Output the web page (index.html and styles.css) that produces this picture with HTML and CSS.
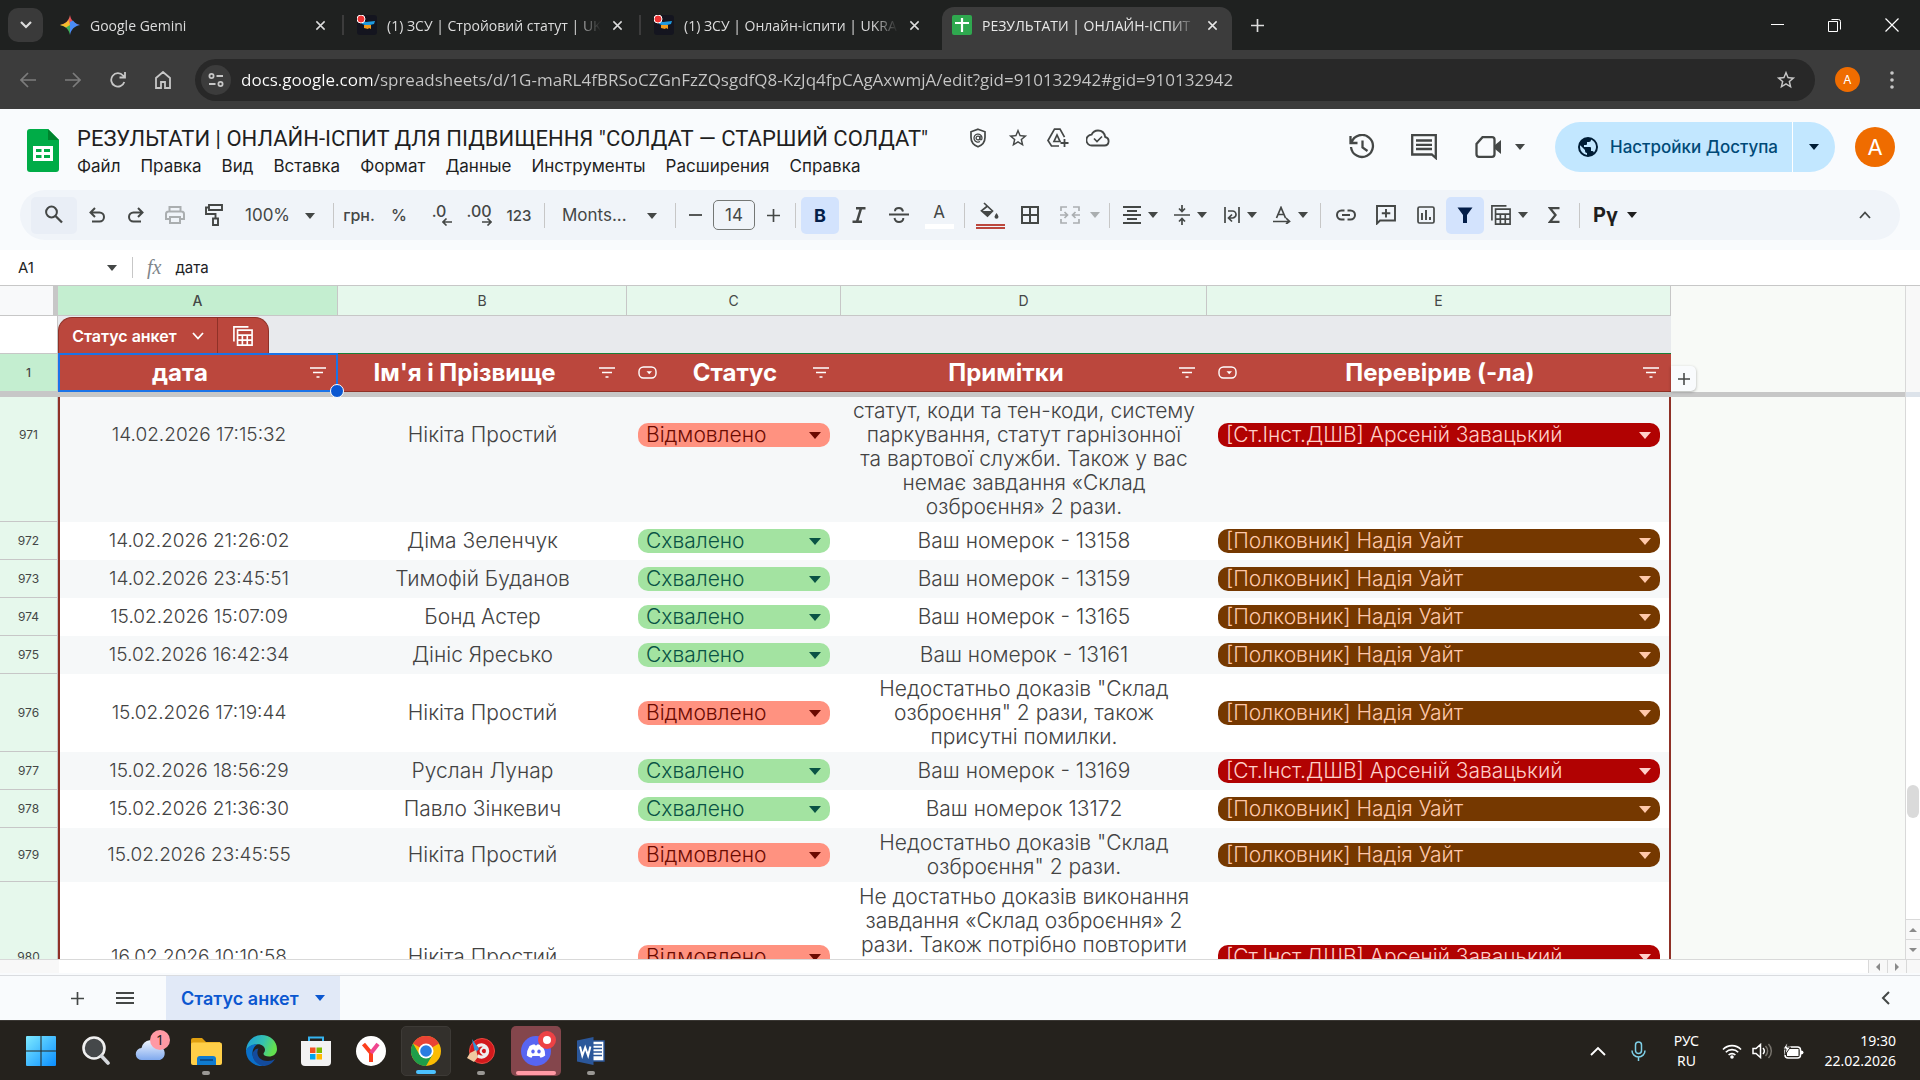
FILE: index.html
```html
<!DOCTYPE html>
<html lang="uk">
<head>
    <meta charset="UTF-8">
    <meta name="viewport" content="width=device-width, initial-scale=1.0">
    <title>РЕЗУЛЬТАТИ | ОНЛАЙН-ІСПИТ</title>
    <link rel="stylesheet" href="styles.css">
</head>
<body>
    <svg class="sprite" aria-hidden="true">
        <symbol id="i-close" viewBox="0 0 12 12"><path d="M1.5 1.5l9 9M10.5 1.5l-9 9" fill="none" stroke="currentColor" stroke-width="1.6"/></symbol>
        <symbol id="i-plus" viewBox="0 0 14 14"><path d="M7 0v14M0 7h14" fill="none" stroke="currentColor" stroke-width="1.8"/></symbol>
        <symbol id="i-star" viewBox="0 0 24 24"><path d="M22 9.24l-7.19-.62L12 2 9.19 8.63 2 9.24l5.46 4.73L5.82 21 12 17.27 18.18 21l-1.63-7.03L22 9.24zM12 15.4l-3.76 2.27 1-4.28-3.32-2.88 4.38-.38L12 6.1l1.71 4.04 4.38.38-3.32 2.88 1 4.28L12 15.4z"/></symbol>
        <symbol id="i-filter" viewBox="0 0 16 11"><path d="M0 1h16M3 5.500h10M6.500 10h3" fill="none" stroke="currentColor" stroke-width="1.5"/></symbol>
        <symbol id="i-chip" viewBox="0 0 19 13"><rect x="1" y="1" width="17" height="11" rx="4.500" fill="none" stroke="currentColor" stroke-width="1.400"/><path d="M8.500 5.200h5.500L11.200 8.300z"/></symbol>
        <symbol id="i-table" viewBox="0 0 22 22"><path d="M1 17V1h16" fill="none" stroke="currentColor" stroke-width="1.800"/><path d="M5 4.500h16V21H5zM5 10h16M5 15.500h16M10.300 10v11M15.700 10v11" fill="none" stroke="currentColor" stroke-width="1.800"/></symbol>
        <symbol id="i-zsu" viewBox="0 0 20 20"><rect width="20" height="20" rx="3" fill="#14151f"/><path d="M5 6l4 1 9-1-1 3-4 1H8L5 9z" fill="#1e9ae0"/><path d="M7 10h7v4l-2-1-1 1-4-1z" fill="#f09a1c"/><circle cx="4" cy="4" r="4" fill="#e33" stroke="#fff" stroke-width="1"/></symbol>
    </svg>

    <!-- Browser tabs -->
    <header class="tabstrip">
        <button class="tab-search" aria-label="Search tabs"><svg width="12" height="8" viewBox="0 0 12 8"><path d="M1 1l5 5 5-5" fill="none" stroke="currentColor" stroke-width="2.2"/></svg></button>
        <div class="tab">
            <svg class="favicon" viewBox="0 0 20 20"><path d="M10 0c1 5.500 4.500 9 10 10H10z" fill="#e8505b"/><path d="M10 0C9 5.500 5.500 9 0 10h10z" fill="#e8695b"/><path d="M0 10c5.500 1 9 4.500 10 10V10z" fill="#3fae5c"/><path d="M0 10c4-.7 7-2.500 8.500-5L10 10l-4 2.500C4.500 11.300 2 10.400 0 10z" fill="#f5bd2d"/><path d="M20 10c-5.500 1-9 4.500-10 10V7l3-1.500c1.800 2.500 4 4 7 4.500z" fill="#4a8cf7"/></svg>
            <span class="tab-title">Google Gemini</span>
            <button class="tab-close" aria-label="Close"><svg width="11" height="11"><use href="#i-close"/></svg></button>
        </div>
        <div class="tab">
            <svg class="favicon"><use href="#i-zsu"/></svg>
            <span class="tab-title">(1) ЗСУ | Стройовий статут | UK</span>
            <button class="tab-close" aria-label="Close"><svg width="11" height="11"><use href="#i-close"/></svg></button>
        </div>
        <div class="tab">
            <svg class="favicon"><use href="#i-zsu"/></svg>
            <span class="tab-title">(1) ЗСУ | Онлайн-іспити | UKRA</span>
            <button class="tab-close" aria-label="Close"><svg width="11" height="11"><use href="#i-close"/></svg></button>
        </div>
        <div class="tab active">
            <svg class="favicon" viewBox="0 0 20 20"><rect width="20" height="20" rx="2" fill="#2fa84f"/><path d="M10 3v14M3 8h14" stroke="#fff" stroke-width="2.200"/></svg>
            <span class="tab-title">РЕЗУЛЬТАТИ | ОНЛАЙН-ІСПИТ</span>
            <button class="tab-close" aria-label="Close"><svg width="11" height="11"><use href="#i-close"/></svg></button>
        </div>
        <button class="new-tab" aria-label="New tab"><svg width="13" height="13"><use href="#i-plus"/></svg></button>
        <div class="window-buttons">
            <button aria-label="Minimize"><svg width="14" height="14" viewBox="0 0 14 14"><path d="M0 6.500h13" stroke="currentColor"/></svg></button>
            <button aria-label="Restore"><svg width="14" height="14" viewBox="0 0 14 14"><path d="M.5 3.500h9v10h-9zM3.500 1.500h7q2 0 2 2v8" fill="none" stroke="currentColor"/></svg></button>
            <button aria-label="Close window"><svg width="14" height="14" viewBox="0 0 14 14"><path d="M.5.5l13 13M13.500.5l-13 13" stroke="currentColor" stroke-width="1.200"/></svg></button>
        </div>
    </header>

    <nav class="navbar">
        <button class="nav-button dim" aria-label="Back"><svg width="16" height="16" viewBox="0 0 16 16"><path d="M16 8H1M8 1L1 8l7 7" fill="none" stroke="currentColor" stroke-width="1.700"/></svg></button>
        <button class="nav-button dim" aria-label="Forward"><svg width="16" height="16" viewBox="0 0 16 16"><path d="M0 8h15M8 1l7 7-7 7" fill="none" stroke="currentColor" stroke-width="1.700"/></svg></button>
        <button class="nav-button" aria-label="Reload"><svg width="16" height="16" viewBox="0 0 16 16"><path d="M14.300 10A6.700 6.700 0 1 1 13 3.500l2 2M15 0v5.500H9.500" fill="none" stroke="currentColor" stroke-width="1.800"/></svg></button>
        <button class="nav-button" aria-label="Home"><svg width="16" height="18" viewBox="0 0 16 18"><path d="M1 17V7l7-6 7 6v10h-5v-6H6v6z" fill="none" stroke="currentColor" stroke-width="1.800"/></svg></button>
        <div class="address">
            <button class="site-info" aria-label="Site information"><svg width="16" height="14" viewBox="0 0 16 14"><g fill="none" stroke="currentColor" stroke-width="1.800"><circle cx="3.500" cy="3" r="2.100"/><path d="M8.500 3H15M1 11h6.500"/><circle cx="12.500" cy="11" r="2.100"/></g></svg></button>
            <input class="url" type="text" aria-label="Address" value="docs.google.com/spreadsheets/d/1G-maRL4fBRSoCZGnFzZQsgdfQ8-KzJq4fpCAgAxwmjA/edit?gid=910132942#gid=910132942">
            <button class="bookmark" aria-label="Bookmark"><svg width="22" height="22"><use href="#i-star"/></svg></button>
        </div>
        <button class="profile" aria-label="Profile">А</button>
        <button class="kebab" aria-label="Menu"><svg width="4" height="18" viewBox="0 0 4 18"><circle cx="2" cy="2" r="1.800"/><circle cx="2" cy="9" r="1.800"/><circle cx="2" cy="16" r="1.800"/></svg></button>
    </nav>

    <!-- Document header -->
    <div class="app-header">
        <svg class="logo" viewBox="0 0 32 43"><path d="M3 0h18l11 11v29a3 3 0 0 1-3 3H3a3 3 0 0 1-3-3V3a3 3 0 0 1 3-3z" fill="#00ac47"/><path d="M21 0l11 11H21z" fill="#00832d"/><path d="M6 17h20v15H6zm3 3v3h5.500v-3zm8 0v3H23v-3zm-8 6v3h5.500v-3zm8 0v3H23v-3z" fill="#fff" fill-rule="evenodd"/></svg>
        <div class="doc">
            <div class="doc-row">
                <h1>РЕЗУЛЬТАТИ | ОНЛАЙН-ІСПИТ ДЛЯ ПІДВИЩЕННЯ "СОЛДАТ — СТАРШИЙ СОЛДАТ"</h1>
                <button aria-label="Security"><svg width="20" height="20" viewBox="0 0 20 20"><path d="M10 1.200l7 2.600v5.400c0 4.500-3 8-7 9.600-4-1.600-7-5.100-7-9.600V3.800z" fill="none" stroke="currentColor" stroke-width="1.700"/><circle cx="10" cy="10" r="1.900" fill="none" stroke="currentColor" stroke-width="1.300"/><path d="M12 8v2.700c0 1.600 2 1.500 2-.7a4 4 0 1 0-2 3.500" fill="none" stroke="currentColor" stroke-width="1.300"/></svg></button>
                <button aria-label="Star"><svg width="22" height="22"><use href="#i-star"/></svg></button>
                <button aria-label="Add to Drive"><svg width="22" height="20" viewBox="0 0 22 20"><path d="M12 18H4.500L1 12.500 7.500 1.200h5.500l4.500 8M7 13.500h6L10 7z" fill="none" stroke="currentColor" stroke-width="1.700"/><path d="M17.500 11v8M13.500 15h8" stroke="currentColor" stroke-width="1.800"/></svg></button>
                <button aria-label="Saved"><svg width="24" height="18" viewBox="0 0 24 18"><path d="M18.500 16.500a4.300 4.300 0 0 0 .7-8.500C18.500 4 15.700 1.500 12 1.500c-3 0-5.300 1.600-6.400 4.200A5.400 5.400 0 0 0 6 16.500z" fill="none" stroke="currentColor" stroke-width="1.800"/><path d="M8 9.500l3 3 5-5" fill="none" stroke="currentColor" stroke-width="1.700"/></svg></button>
            </div>
            <div class="menus">
                <button>Файл</button>
                <button>Правка</button>
                <button>Вид</button>
                <button>Вставка</button>
                <button>Формат</button>
                <button>Данные</button>
                <button>Инструменты</button>
                <button>Расширения</button>
                <button>Справка</button>
            </div>
        </div>
        <div class="header-actions">
            <button class="action" aria-label="History"><svg width="28" height="26" viewBox="0 0 28 26"><path d="M3.500 8.500A11 11 0 1 1 3 13M2.500 2v7h7M14.500 6.500v7l5 3.500" fill="none" stroke="currentColor" stroke-width="2.300"/></svg></button>
            <button class="action" aria-label="Comments"><svg width="26" height="26" viewBox="0 0 26 26"><path d="M1.200 1.200h23.600V24l-4-3.500H1.200z" fill="none" stroke="currentColor" stroke-width="2.300"/><path d="M5 6.500h16M5 10.800h16M5 15h16" stroke="currentColor" stroke-width="2.300"/></svg></button>
            <button class="action meet" aria-label="Meet"><svg width="27" height="22" viewBox="0 0 27 22"><path d="M7.500 1.200H17q2.500 0 2.500 2.500v14.600q0 2.500-2.500 2.500H4q-2.500 0-2.500-2.500V8z" fill="none" stroke="currentColor" stroke-width="2.300"/><path d="M20 9l6-5v14l-6-5z"/></svg><span class="caret"></span></button>
            <div class="share">
                <button class="share-main"><svg width="20" height="20" viewBox="2 2 20 20"><path d="M12 2a10 10 0 1 0 0 20 10 10 0 0 0 0-20zm-1 17.930A8 8 0 0 1 4 12c0-.62.080-1.210.210-1.790L9 15v1a2 2 0 0 0 2 2v1.930zm6.900-2.540A2 2 0 0 0 16 16h-1v-3a1 1 0 0 0-1-1H8v-2h2a1 1 0 0 0 1-1V7h2a2 2 0 0 0 2-2v-.41A8 8 0 0 1 17.900 17.390z"/></svg>Настройки Доступа</button>
                <button class="share-more" aria-label="More sharing options"><span class="caret"></span></button>
            </div>
            <button class="avatar" aria-label="Account">А</button>
        </div>
    </div>

    <!-- Toolbar -->
    <div class="toolbar">
        <button class="tool search" aria-label="Search"><svg width="20" height="20" viewBox="0 0 20 20"><circle cx="7.500" cy="7" r="5.400" fill="none" stroke="currentColor" stroke-width="2"/><path d="M11.500 11l6.500 6.500" stroke="currentColor" stroke-width="2.300"/></svg></button>
        <button class="tool edit" aria-label="Undo"><svg width="16" height="16" viewBox="0 0 16 16"><path d="M3 14.500h7.500a4.500 4.500 0 0 0 0-9H2M6 1L1.500 5.500 6 10" fill="none" stroke="currentColor" stroke-width="2"/></svg></button>
        <button class="tool edit" aria-label="Redo"><svg width="16" height="16" viewBox="0 0 16 16"><path d="M13 14.500H5.500a4.500 4.500 0 0 1 0-9H14M10 1l4.500 4.500L10 10" fill="none" stroke="currentColor" stroke-width="2"/></svg></button>
        <button class="tool edit faint" aria-label="Print"><svg width="20" height="18" viewBox="0 0 20 18"><path d="M4.500 5V1h11v4M4.500 13H1V8q0-2.500 2.500-2.500h13Q19 5.500 19 8v5h-3.500M5 11h10v6H5z" fill="none" stroke="currentColor" stroke-width="2"/></svg></button>
        <button class="tool edit" aria-label="Paint format"><svg width="18" height="22" viewBox="0 0 18 22"><path d="M4 1h13v5H4zM4 3.500H1V10h9.500v4M8 14.500h5V21H8z" fill="none" stroke="currentColor" stroke-width="1.900"/></svg></button>
        <span class="picker zoom"><select aria-label="Zoom"><option>100%</option></select></span>
        <span class="sep"></span>
        <button class="tool small">грн.</button>
        <button class="tool small">%</button>
        <button class="tool decimal" aria-label="Decrease decimals">.0<svg width="10" height="8" viewBox="0 0 10 8"><path d="M10 4H1M4.500 .5L1 4l3.500 3.500" fill="none" stroke="currentColor" stroke-width="1.600"/></svg></button>
        <button class="tool decimal" aria-label="Increase decimals">.00<svg width="10" height="8" viewBox="0 0 10 8"><path d="M0 4h9M5.500 .5L9 4 5.500 7.500" fill="none" stroke="currentColor" stroke-width="1.600"/></svg></button>
        <button class="tool number">123</button>
        <span class="sep"></span>
        <span class="picker font"><select aria-label="Font"><option>Monts...</option></select></span>
        <span class="sep"></span>
        <div class="stepper">
            <button aria-label="Smaller"><svg width="13" height="14" viewBox="0 0 13 14"><path d="M0 7h13" stroke="currentColor" stroke-width="1.800"/></svg></button>
            <input type="text" aria-label="Font size" value="14">
            <button aria-label="Larger"><svg width="13" height="13"><use href="#i-plus"/></svg></button>
        </div>
        <span class="sep"></span>
        <button class="tool on bold">B</button>
        <button class="tool" aria-label="Italic"><svg width="14" height="16" viewBox="0 0 14 16"><path d="M4 1.300h9.500M.5 14.700H10M9 1.300L5 14.700" fill="none" stroke="currentColor" stroke-width="2.500"/></svg></button>
        <button class="tool" aria-label="Strikethrough"><svg width="20" height="16" viewBox="0 0 20 16"><path d="M0 7.500h20M14 4.500C13.500 2 12 1 10 1S6 2 6 4.200M5.500 11c.5 2.700 2 4 4.500 4s4.500-1.300 4.300-4" fill="none" stroke="currentColor" stroke-width="2"/></svg></button>
        <button class="tool text-color">A</button>
        <span class="sep"></span>
        <button class="tool fill" aria-label="Fill colour"><svg width="20" height="18" viewBox="0 0 20 18"><path d="M4 1l8.500 8-5 5-6-5.200L7.500 4" fill="none" stroke="currentColor" stroke-width="1.700"/><path d="M2 9h10l-4.500 5z"/><path d="M16.500 11q2 2.600 2 3.800a2 2 0 0 1-4 0q0-1.200 2-3.800z"/></svg></button>
        <button class="tool" aria-label="Borders"><svg width="18" height="18" viewBox="0 0 18 18"><path d="M1 1h16v16H1zM9 1v16M1 9h16" fill="none" stroke="currentColor" stroke-width="2"/></svg></button>
        <button class="tool-menu wide faint" aria-label="Merge"><svg width="20" height="18" viewBox="0 0 20 18"><path d="M7 1H1v4M1 13v4h6M13 1h6v4M19 13v4h-6M0 9h7M4.500 6l3 3-3 3M20 9h-7M15.500 6l-3 3 3 3" fill="none" stroke="currentColor" stroke-width="1.700"/></svg><span class="caret"></span></button>
        <span class="sep"></span>
        <button class="tool-menu" aria-label="Align"><svg width="18" height="18" viewBox="0 0 18 18"><path d="M0 1h18M4 5h10M0 9h18M4 13h10M0 17h18" stroke="currentColor" stroke-width="1.800"/></svg><span class="caret"></span></button>
        <button class="tool-menu" aria-label="Vertical align"><svg width="16" height="20" viewBox="0 0 16 20"><path d="M0 10h16M8 0v6M5 3.500l3 3 3-3M8 20v-6M5 16.500l3-3 3 3" fill="none" stroke="currentColor" stroke-width="1.700"/></svg><span class="caret"></span></button>
        <button class="tool-menu" aria-label="Wrap"><svg width="16" height="16" viewBox="0 0 16 16"><path d="M1 0v16M15 0v16M4 4h4.500a3 3 0 0 1 0 7H5M8 7.500L4.500 11 8 14.500" fill="none" stroke="currentColor" stroke-width="1.700"/></svg><span class="caret"></span></button>
        <button class="tool-menu" aria-label="Rotate"><svg width="18" height="18" viewBox="0 0 18 18"><path d="M3.500 12L8 1.500l4.500 10.500M5.300 8.500h5.500M0 15.500h16M13 12l3.500 3.500L13 18" fill="none" stroke="currentColor" stroke-width="1.700"/></svg><span class="caret"></span></button>
        <span class="sep"></span>
        <button class="tool" aria-label="Link"><svg width="20" height="12" viewBox="0 0 20 12"><path d="M8.500 1.500H5.500a4.500 4.500 0 0 0 0 9h3M11.500 1.500h3a4.500 4.500 0 0 1 0 9h-3M6 6h8" fill="none" stroke="currentColor" stroke-width="2"/></svg></button>
        <button class="tool" aria-label="Comment"><svg width="20" height="20" viewBox="0 0 20 20"><path d="M1 18.500V1h18v14.500H4zM10 4v8.500M5.800 8.200h8.500" fill="none" stroke="currentColor" stroke-width="1.900"/></svg></button>
        <button class="tool" aria-label="Chart"><svg width="18" height="18" viewBox="0 0 18 18"><rect x="1" y="1" width="16" height="16" rx="1.500" fill="none" stroke="currentColor" stroke-width="1.700"/><path d="M5 7v7M9 4v10M13 11v3" stroke="currentColor" stroke-width="1.900"/></svg></button>
        <button class="tool on" aria-label="Filter"><svg width="16" height="16" viewBox="0 0 16 16"><path d="M.5.500h15L10 8v8H6V8z"/></svg></button>
        <button class="tool-menu" aria-label="Tables"><svg width="20" height="20"><use href="#i-table"/></svg><span class="caret"></span></button>
        <button class="tool" aria-label="Functions"><svg width="12" height="16" viewBox="0 0 12 16"><path d="M11.500 1.200H2L7.500 8 2 14.800h9.500" fill="none" stroke="currentColor" stroke-width="2.300"/></svg></button>
        <span class="sep"></span>
        <button class="tool-menu py">Pү<span class="caret"></span></button>
        <button class="tool collapse" aria-label="Collapse"><svg width="12" height="8" viewBox="0 0 12 8"><path d="M1 7l5-5.500L11 7" fill="none" stroke="currentColor" stroke-width="1.800"/></svg></button>
    </div>

    <div class="formula-bar">
        <input class="name-box" type="text" aria-label="Name box" value="A1">
        <span class="caret"></span>
        <span class="fx">fx</span>
        <input class="formula" type="text" aria-label="Formula" value="дата">
    </div>

    <main class="workspace">
        <div class="sheet">
            <div class="frozen">
                <table class="grid">
                    <colgroup><col class="c-num"><col class="c-a"><col class="c-b"><col class="c-c"><col class="c-d"><col class="c-e"></colgroup>
                    <thead>
                        <tr class="letters"><th class="corner"></th><th class="selected">A</th><th>B</th><th>C</th><th>D</th><th>E</th></tr>
                        <tr class="band">
                            <th></th>
                            <td colspan="5">
                                <div class="table-tab">
                                    <button class="table-name">Статус анкет<svg width="12" height="8" viewBox="0 0 12 8"><path d="M1 1l5 5.500L11 1" fill="none" stroke="currentColor" stroke-width="1.800"/></svg></button>
                                    <button class="table-views" aria-label="Table views"><svg width="20" height="20"><use href="#i-table"/></svg></button>
                                </div>
                            </td>
                        </tr>
                        <tr class="titles">
                            <th class="num">1</th>
                            <th class="current"><div class="title-cell"><span>дата</span><svg class="filter"><use href="#i-filter"/></svg></div></th>
                            <th><div class="title-cell"><span>Ім'я і Прізвище</span><svg class="filter"><use href="#i-filter"/></svg></div></th>
                            <th><div class="title-cell has-chip"><svg class="chip-icon"><use href="#i-chip"/></svg><span>Статус</span><svg class="filter"><use href="#i-filter"/></svg></div></th>
                            <th><div class="title-cell"><span>Примітки</span><svg class="filter"><use href="#i-filter"/></svg></div></th>
                            <th><div class="title-cell has-chip"><svg class="chip-icon"><use href="#i-chip"/></svg><span>Перевірив (-ла)</span><svg class="filter"><use href="#i-filter"/></svg></div><button class="add-column" aria-label="Add column"><svg width="12" height="12"><use href="#i-plus"/></svg></button></th>
                        </tr>
                    </thead>
                </table>
            </div>
            <div class="scroller">
                <table class="grid data">
                    <colgroup><col class="c-num"><col class="c-a"><col class="c-b"><col class="c-c"><col class="c-d"><col class="c-e"></colgroup>
                    <tbody>
                        <tr class="cut-top"><th>971</th><td class="date">14.02.2026 17:15:32</td><td>Нікіта Простий</td><td><span class="chip no"><select aria-label="Статус 971"><option>Відмовлено</option></select></span></td><td class="note bottom">статут, коди та тен-коди, систему<br>паркування, статут гарнізонної<br>та вартової служби. Також у вас<br>немає завдання «Склад<br>озброєння» 2 рази.</td><td><span class="chip red"><select aria-label="Перевірив 971"><option>[Ст.Інст.ДШВ] Арсеній Завацький</option></select></span></td></tr>
                        <tr><th>972</th><td class="date">14.02.2026 21:26:02</td><td>Діма Зеленчук</td><td><span class="chip yes"><select aria-label="Статус 972"><option>Схвалено</option></select></span></td><td class="note">Ваш номерок - 13158</td><td><span class="chip brown"><select aria-label="Перевірив 972"><option>[Полковник] Надія Уайт</option></select></span></td></tr>
                        <tr><th>973</th><td class="date">14.02.2026 23:45:51</td><td>Тимофій Буданов</td><td><span class="chip yes"><select aria-label="Статус 973"><option>Схвалено</option></select></span></td><td class="note">Ваш номерок - 13159</td><td><span class="chip brown"><select aria-label="Перевірив 973"><option>[Полковник] Надія Уайт</option></select></span></td></tr>
                        <tr><th>974</th><td class="date">15.02.2026 15:07:09</td><td>Бонд Астер</td><td><span class="chip yes"><select aria-label="Статус 974"><option>Схвалено</option></select></span></td><td class="note">Ваш номерок - 13165</td><td><span class="chip brown"><select aria-label="Перевірив 974"><option>[Полковник] Надія Уайт</option></select></span></td></tr>
                        <tr><th>975</th><td class="date">15.02.2026 16:42:34</td><td>Дініс Яресько</td><td><span class="chip yes"><select aria-label="Статус 975"><option>Схвалено</option></select></span></td><td class="note">Ваш номерок - 13161</td><td><span class="chip brown"><select aria-label="Перевірив 975"><option>[Полковник] Надія Уайт</option></select></span></td></tr>
                        <tr><th>976</th><td class="date">15.02.2026 17:19:44</td><td>Нікіта Простий</td><td><span class="chip no"><select aria-label="Статус 976"><option>Відмовлено</option></select></span></td><td class="note">Недостатньо доказів "Склад<br>озброєння" 2 рази, також<br>присутні помилки.</td><td><span class="chip brown"><select aria-label="Перевірив 976"><option>[Полковник] Надія Уайт</option></select></span></td></tr>
                        <tr><th>977</th><td class="date">15.02.2026 18:56:29</td><td>Руслан Лунар</td><td><span class="chip yes"><select aria-label="Статус 977"><option>Схвалено</option></select></span></td><td class="note">Ваш номерок - 13169</td><td><span class="chip red"><select aria-label="Перевірив 977"><option>[Ст.Інст.ДШВ] Арсеній Завацький</option></select></span></td></tr>
                        <tr><th>978</th><td class="date">15.02.2026 21:36:30</td><td>Павло Зінкевич</td><td><span class="chip yes"><select aria-label="Статус 978"><option>Схвалено</option></select></span></td><td class="note">Ваш номерок 13172</td><td><span class="chip brown"><select aria-label="Перевірив 978"><option>[Полковник] Надія Уайт</option></select></span></td></tr>
                        <tr><th>979</th><td class="date">15.02.2026 23:45:55</td><td>Нікіта Простий</td><td><span class="chip no"><select aria-label="Статус 979"><option>Відмовлено</option></select></span></td><td class="note">Недостатньо доказів "Склад<br>озброєння" 2 рази.</td><td><span class="chip brown"><select aria-label="Перевірив 979"><option>[Полковник] Надія Уайт</option></select></span></td></tr>
                        <tr class="cut-bottom"><th>980</th><td class="date">16.02.2026 10:10:58</td><td>Нікіта Простий</td><td><span class="chip no"><select aria-label="Статус 980"><option>Відмовлено</option></select></span></td><td class="note top">Не достатньо доказів виконання<br>завдання «Склад озброєння» 2<br>рази. Також потрібно повторити</td><td><span class="chip red"><select aria-label="Перевірив 980"><option>[Ст.Інст.ДШВ] Арсеній Завацький</option></select></span></td></tr>
                    </tbody>
                </table>
            </div>
        </div>
        <div class="vscroll">
            <div class="vscroll-head"></div>
            <div class="vscroll-track"><div class="thumb"></div></div>
            <button aria-label="Up"><span class="arrow up"></span></button>
            <button aria-label="Down"><span class="arrow down"></span></button>
        </div>
    </main>
    <div class="hscroll">
        <div class="hscroll-track"></div>
        <button aria-label="Left"><span class="arrow left"></span></button>
        <button aria-label="Right"><span class="arrow right"></span></button>
        <div class="hscroll-end"></div>
    </div>

    <footer class="sheet-tabs">
        <button class="sheet-button" aria-label="Add sheet"><svg width="13" height="13"><use href="#i-plus"/></svg></button>
        <button class="sheet-button" aria-label="All sheets"><svg width="18" height="12" viewBox="0 0 18 12"><path d="M0 1h18M0 6h18M0 11h18" stroke="currentColor" stroke-width="1.900"/></svg></button>
        <button class="sheet-tab">Статус анкет<span class="caret"></span></button>
        <button class="sheet-button side" aria-label="Show side panel"><svg width="9" height="14" viewBox="0 0 9 14"><path d="M8 1L2 7l6 6" fill="none" stroke="currentColor" stroke-width="2"/></svg></button>
    </footer>

    <!-- Windows taskbar -->
    <div class="taskbar">
        <button class="app" aria-label="Start"><svg width="30" height="30" viewBox="0 0 30 30"><defs><linearGradient id="g-win" x2="1" y2="1"><stop stop-color="#7eeaff"/><stop offset="1" stop-color="#0a8eff"/></linearGradient></defs><path d="M1 0h13.500v14.500H0V1a1 1 0 0 1 1-1zM15.500 0H29a1 1 0 0 1 1 1v13.500H15.500zM0 15.500h14.500V30H1a1 1 0 0 1-1-1zM15.500 15.500H30V29a1 1 0 0 1-1 1H15.500z" fill="url(#g-win)"/></svg></button>
        <button class="app" aria-label="Search"><svg width="28" height="29" viewBox="0 0 28 29"><circle cx="12" cy="12" r="10.500" fill="#45484a" stroke="#f0f0f0" stroke-width="2.600"/><path d="M19.500 20l6.500 7" stroke="#d5d8dc" stroke-width="3.600" stroke-linecap="round"/></svg></button>
        <button class="app" aria-label="Weather"><svg width="32" height="30" viewBox="0 0 32 30"><defs><linearGradient id="g-cloud" x2="0" y2="1"><stop stop-color="#f0f6ff"/><stop offset="1" stop-color="#7fa9ee"/></linearGradient></defs><path d="M7 24a6 6 0 0 1-.5-12A9 9 0 0 1 24 10.500a7 7 0 0 1 1 13.500z" fill="url(#g-cloud)"/></svg><span class="badge">1</span></button>
        <button class="app running" aria-label="Explorer"><svg width="31" height="28" viewBox="0 0 31 28"><path d="M0 3a2 2 0 0 1 2-2h9l4 4h14v6H0z" fill="#e0a010"/><rect y="5.500" width="31" height="22.500" rx="2" fill="#ffcf48"/><path d="M6 28v-6a3 3 0 0 1 3-3h13a3 3 0 0 1 3 3v6z" fill="#0f7bd0"/><path d="M9 23h13" stroke="#0a4f90" stroke-width="2"/></svg></button>
        <button class="app" aria-label="Edge"><svg width="31" height="31" viewBox="0 0 31 31"><defs><linearGradient id="g-edge" x2="1" y2=".3"><stop stop-color="#1b9de2"/><stop offset=".6" stop-color="#35c1b0"/><stop offset="1" stop-color="#63e04f"/></linearGradient></defs><path d="M15.500 0C24 0 31 6 31 14c0 5-4 7.500-8 7.500-3 0-5.500-1-5.500-2.700 0-1 1.500-1.800 1.500-4 0-3-3-5.600-7-5.600C6 9.200 1 13 0 17 0 7 7 0 15.500 0z" fill="url(#g-edge)"/><path d="M0 16c1-4.500 6-7 11.500-6.800-3.500 2-5 5.500-5 9 0 6 5 10.800 11 12.600C8 32 0 25 0 16z" fill="#0a6fc8"/><path d="M12.500 13.500c-3 5 0 13 9.500 12.500 3 0 5-1 7-2-2.500 4.500-7 7-12 7-6-1-10.500-6-10.500-12 0-2.500 3-5.500 6-5.500z" fill="#134b9c"/></svg></button>
        <button class="app" aria-label="Store"><svg width="30" height="30" viewBox="0 0 30 30"><path d="M8 7V1.500h14V7" fill="none" stroke="#35b4f0" stroke-width="2"/><path d="M0 5h30v21a4 4 0 0 1-4 4H4a4 4 0 0 1-4-4z" fill="#f2f2f2"/><path d="M9 11.500h5.500V17H9z" fill="#f25022"/><path d="M15.500 11.500H21V17h-5.500z" fill="#7fba00"/><path d="M9 18h5.500v5.500H9z" fill="#00a4ef"/><path d="M15.500 18H21v5.500h-5.500z" fill="#ffb900"/></svg></button>
        <button class="app" aria-label="Yandex"><svg width="30" height="30" viewBox="0 0 30 30"><circle cx="15" cy="15" r="15" fill="#fff"/><path d="M7.500 8l7.500 9v9" fill="none" stroke="#fc3f1d" stroke-width="4"/><path d="M15 17l7-9" stroke="#f0468f" stroke-width="4"/></svg></button>
        <button class="app focused" aria-label="Chrome"><svg width="30" height="30" viewBox="0 0 30 30"><circle cx="15" cy="15" r="15" fill="#fbbc04"/><path d="M15 15L2 7.500A15 15 0 0 1 28 7.500z" fill="#ea4335"/><path d="M2 7.500A15 15 0 0 0 15 30l6.500-11.300L8.500 18.700z" fill="#1e9e4a"/><circle cx="15" cy="15" r="7.500" fill="#fff"/><circle cx="15" cy="15" r="5.800" fill="#2a7de1"/></svg></button>
        <button class="app running" aria-label="CCleaner"><svg width="28" height="28" viewBox="0 0 28 28"><circle cx="15" cy="14" r="12.500" fill="#d3191c" stroke="#e9483f" stroke-width="1"/><path d="M10.500 9.500a6 6 0 1 1 0 9" fill="none" stroke="#eee" stroke-width="3.500"/><path d="M19 11.500a3.200 3.200 0 1 0 0 5" fill="none" stroke="#eee" stroke-width="2"/><path d="M5 2l7 10-4 4z" fill="#3292d6"/><path d="M3 16l6-3 2 7-4 5-7-4z" fill="#f0c9a0"/></svg></button>
        <button class="app alert" aria-label="Discord"><svg width="30" height="30" viewBox="0 0 30 30"><circle cx="15" cy="15" r="15" fill="#5865f2"/><path d="M8.500 10q3-1.800 5-1.800l.6 1h1.800l.6-1q2 0 5 1.800 3 5 2.700 9.500-2.200 1.800-4.700 2.300l-1-1.800h-7l-1 1.800Q8 21.300 5.800 19.500 5.500 15 8.500 10z" fill="#fff"/><ellipse cx="12" cy="15.500" rx="1.700" ry="2" fill="#5865f2"/><ellipse cx="18" cy="15.500" rx="1.700" ry="2" fill="#5865f2"/></svg><span class="live"></span></button>
        <button class="app running" aria-label="Word"><svg width="28" height="28" viewBox="0 0 28 28"><path d="M14 4h13v20H14z" fill="#fff" stroke="#2b579a" stroke-width="1.400"/><path d="M16 8h9M16 11.500h9M16 15h9M16 18.500h9" stroke="#2b579a" stroke-width="1.600"/><path d="M0 3.500L16.500 0v28L0 24.500z" fill="#2b579a"/><path d="M3 9.500l2.300 9 2.900-8 2.900 8 2.300-9" fill="none" stroke="#fff" stroke-width="2"/></svg></button>
        <div class="tray">
            <button class="tray-icon" aria-label="Hidden icons"><svg width="16" height="10" viewBox="0 0 16 10"><path d="M1 9l7-7 7 7" fill="none" stroke="currentColor" stroke-width="1.900"/></svg></button>
            <button class="tray-icon mic" aria-label="Microphone"><svg width="15" height="20" viewBox="0 0 15 20"><rect x="4.500" y="1" width="6" height="11.500" rx="3" fill="none" stroke="currentColor" stroke-width="1.500"/><path d="M1 9.500a6.500 6.500 0 0 0 13 0M7.500 16v4" fill="none" stroke="currentColor" stroke-width="1.500"/></svg></button>
            <button class="lang"><span>РУС</span><span>RU</span></button>
            <button class="net" aria-label="Network, sound, battery">
                <svg width="20" height="16" viewBox="0 0 20 16"><g fill="none" stroke="currentColor" stroke-width="1.600"><path d="M1 6.500a12.500 12.500 0 0 1 18 0M3.800 9.300a8.600 8.600 0 0 1 12.400 0M6.600 12a4.800 4.800 0 0 1 6.800 0"/></g><circle cx="10" cy="14" r="1.800"/></svg>
                <svg width="21" height="16" viewBox="0 0 21 16"><path d="M1 5.500h3L8.500 1.500v13L4 10.500H1zM11 5a4.500 4.500 0 0 1 0 6" fill="none" stroke="currentColor" stroke-width="1.500"/><path d="M13.500 3a7 7 0 0 1 0 10M16.500 1a10 10 0 0 1 0 14" fill="none" stroke="#77736c" stroke-width="1.500"/></svg>
                <svg width="21" height="17" viewBox="0 0 21 17"><rect x="2" y="5" width="15.500" height="11" rx="3" fill="none" stroke="currentColor" stroke-width="1.500"/><rect x="4" y="7" width="11.500" height="7"/><path d="M18 8.500q2.500 0 2.500 2t-2.500 2z"/><path d="M4.500 0L0 7h3l-1 6 5.500-8H4z" stroke="#25221d" stroke-width="1"/></svg>
            </button>
            <button class="clock"><span>19:30</span><span>22.02.2026</span></button>
        </div>
    </div>
</body>
</html>
```
FILE: styles.css
```css
* {
    box-sizing: border-box;
}
body {
    margin: 0;
    height: 100vh;
    display: flex;
    flex-direction: column;
    overflow: hidden;
    font-family: Inter, "Noto Sans", sans-serif;
    color: #1f1f1f;
    background-color: #f9fbfd;
}
button, input, select {
    margin: 0;
    padding: 0;
    border: 0;
    background: none;
    font: inherit;
    color: inherit;
}
button {
    display: flex;
    align-items: center;
    justify-content: center;
    flex-shrink: 0;
    white-space: nowrap;
}
svg {
    fill: currentColor;
    flex-shrink: 0;
}
.sprite {
    display: none;
}
.caret {
    width: 0;
    border: 5px solid transparent;
    border-top: 6px solid currentColor;
    border-bottom: 0;
}

/* browser */
.tabstrip {
    display: flex;
    align-items: center;
    height: 50px;
    flex-shrink: 0;
    padding-left: 8px;
    background-color: #1f2120;
    color: #dcdcdc;
    font: 14px "Open Sans", sans-serif;
}
.tab-search {
    width: 35px;
    height: 34px;
    margin-right: 4px;
    border-radius: 10px;
    background-color: #3a3a3a;
}
.tab {
    display: flex;
    align-items: center;
    width: 297px;
    height: 20px;
    padding: 0 14px 0 13px;
    border-right: 2px solid #3c3c3c;
}
.tab:nth-child(4) {
    border-color: transparent;
}
.tab.active {
    width: 290px;
    height: 43px;
    margin: 7px 0 0 4px;
    padding: 0 12px 7px 10px;
    border: 0;
    border-radius: 12px 12px 0 0;
    background-color: #3c3c3c;
    color: #e8e8e8;
}
.favicon {
    width: 20px;
    height: 20px;
    margin-right: 10px;
}
.tab-title {
    flex: 1;
    overflow: hidden;
    white-space: nowrap;
    -webkit-mask-image: linear-gradient(90deg, #000 88%, transparent);
    mask-image: linear-gradient(90deg, #000 88%, transparent);
}
.tab-close {
    width: 16px;
    margin-left: 8px;
}
.new-tab {
    width: 50px;
    height: 40px;
}
.window-buttons {
    display: flex;
    margin-left: auto;
    color: #fff;
}
.window-buttons button {
    width: 57px;
    height: 48px;
}
.navbar {
    display: flex;
    align-items: center;
    height: 59px;
    flex-shrink: 0;
    padding: 0 10px 0 5px;
    background-color: #3c3c3c;
    color: #c7c7c7;
}
.nav-button {
    width: 45px;
    height: 40px;
}
.dim {
    color: #7c7c7c;
}
.address {
    display: flex;
    align-items: center;
    flex: 1;
    height: 42px;
    margin: 0 20px 0 10px;
    padding: 0 18px 0 6px;
    border-radius: 21px;
    background-color: #282828;
}
.site-info {
    width: 30px;
    height: 30px;
    border-radius: 15px;
    background-color: #3c3c3c;
}
.url {
    flex: 1;
    height: 32px;
    margin-left: 10px;
    font: 17px "Open Sans", sans-serif;
    background: linear-gradient(90deg, #fff 131px, #c7c7c7 131px);
    -webkit-background-clip: text;
    background-clip: text;
    color: transparent;
}
.profile {
    width: 25px;
    height: 25px;
    border-radius: 50%;
    background-color: #ef6c00;
    color: #fff;
    font-size: 12px;
}
.kebab {
    width: 36px;
    height: 36px;
    margin-left: 14px;
}

/* document header */
.app-header {
    display: flex;
    height: 81px;
    flex-shrink: 0;
    padding-left: 27px;
}
.logo {
    width: 32px;
    height: 43px;
    margin: 20px 8px 0 0;
}
.doc {
    padding-top: 12px;
}
.doc-row {
    display: flex;
    align-items: center;
    height: 34px;
    padding-left: 10px;
}
.doc-row h1 {
    margin: 0 30px 0 0;
    font-family: Roboto, sans-serif;
    font-size: 22px;
    font-weight: 400;
    white-space: nowrap;
}
.doc-row button {
    width: 40px;
    height: 34px;
    color: #444746;
}
.menus {
    display: flex;
    height: 22px;
}
.menus button {
    padding: 0 10px;
    font-size: 17px;
}
.header-actions {
    display: flex;
    align-items: center;
    height: 50px;
    margin: 13px 25px 0 auto;
    color: #444746;
}
.action {
    width: 62px;
    height: 50px;
}
.action.meet {
    width: 90px;
    gap: 13px;
    margin-right: 10px;
}
.share {
    display: flex;
    height: 50px;
    border-radius: 25px;
    background-color: #c2e7ff;
    color: #001d35;
}
.share-main {
    gap: 12px;
    padding: 0 14px 0 23px;
    border-right: 1px solid #fff;
    color: #004a77;
    font-size: 17px;
    font-weight: 500;
}
.share-main svg {
    fill: #001d35;
}
.share-more {
    width: 42px;
}
.avatar {
    width: 40px;
    height: 40px;
    margin-left: 20px;
    border-radius: 50%;
    background-color: #ef6c00;
    color: #fff;
    font-size: 22px;
}

/* toolbar */
.toolbar {
    display: flex;
    align-items: center;
    height: 50px;
    flex-shrink: 0;
    margin: 0 20px 10px;
    padding: 0 15px 0 11px;
    border-radius: 25px;
    background-color: #f0f4f9;
    color: #444746;
}
.tool {
    width: 40px;
    height: 37px;
    border-radius: 5px;
}
.tool.edit {
    width: 39px;
}
.tool.search {
    width: 46px;
    background-color: #e9eef6;
}
.tool.small {
    font-size: 16px;
    font-weight: 500;
}
.tool.number {
    font-size: 15px;
    font-weight: 500;
}
.tool.decimal {
    flex-direction: column;
    align-items: center;
    font-size: 16px;
    font-weight: 500;
    line-height: 14px;
}
.tool.decimal svg {
    margin-left: 16px;
}
.tool.on {
    width: 38px;
    background-color: #d3e3fd;
    color: #041e49;
}
.tool.bold {
    font-size: 18px;
    font-weight: 700;
}
.tool.text-color, .tool.fill {
    align-items: flex-start;
    padding-top: 5px;
}
.tool.text-color {
    font-size: 17px;
    line-height: 20px;
    background: linear-gradient(#fff, #fff) center 27px / 29px 5px no-repeat;
}
.tool.fill {
    background: linear-gradient(#bb473d 2px, #f0f4f9 2px, #f0f4f9 3px, #bb473d 3px) center 27px / 29px 5px no-repeat;
}
.faint {
    opacity: 0.4;
}
.tool.collapse {
    margin-left: auto;
}
.tool-menu {
    width: 50px;
    height: 37px;
    gap: 7px;
}
.tool-menu.wide {
    width: 54px;
    gap: 10px;
    padding-left: 6px;
}
.tool-menu.py {
    width: 60px;
    gap: 9px;
    font-size: 20px;
    font-weight: 700;
    color: #1f1f1f;
}
.sep {
    width: 1px;
    height: 25px;
    margin: 0 5px;
    background-color: #c7c7c7;
}
.picker {
    position: relative;
    height: 37px;
}
.picker::after {
    content: "";
    position: absolute;
    right: 13px;
    top: 16px;
    border: 5px solid transparent;
    border-top: 6px solid #444746;
    border-bottom: 0;
    pointer-events: none;
}
.picker select {
    appearance: none;
    width: 100%;
    height: 100%;
    padding-left: 12px;
    font-size: 17px;
}
.zoom {
    width: 95px;
}
.font {
    width: 120px;
}
.stepper {
    display: flex;
    gap: 4px;
    padding-right: 3px;
}
.stepper button {
    width: 28px;
    height: 30px;
}
.stepper input {
    width: 42px;
    height: 30px;
    border: 1px solid #747775;
    border-radius: 5px;
    text-align: center;
    font-size: 17px;
}

.formula-bar {
    display: flex;
    align-items: center;
    height: 35px;
    flex-shrink: 0;
    background-color: #fff;
    color: #444746;
    font-size: 15px;
}
.name-box {
    width: 107px;
    padding-left: 18px;
    color: #1f1f1f;
}
.fx {
    margin-left: 15px;
    padding-left: 14px;
    border-left: 1px solid #c7c7c7;
    font: italic 20px/21px "Liberation Serif", serif;
    color: #80868b;
}
.formula {
    flex: 1;
    margin-left: 14px;
    color: #202124;
}

/* grid */
.workspace {
    display: flex;
    flex: 1;
    min-height: 0;
    border-top: 1px solid #c7c7c7;
}
.sheet {
    display: flex;
    flex-direction: column;
    flex: 1;
    min-width: 0;
    background-color: #f8faf7;
}
.frozen {
    border-bottom: 5px solid #c7c7c7;
}
.scroller {
    flex: 1;
    min-height: 0;
    overflow: hidden;
}
.grid {
    width: 1671px;
    table-layout: fixed;
    border-collapse: separate;
    border-spacing: 0;
}
.grid th, .grid td {
    padding: 0;
}
.c-num {
    width: 58px;
}
.c-a {
    width: 280px;
}
.c-b {
    width: 289px;
}
.c-c {
    width: 214px;
}
.c-d {
    width: 366px;
}
.c-e {
    width: 464px;
}
.letters th {
    height: 30px;
    border-right: 1px solid #c7c7c7;
    border-bottom: 1px solid #c7c7c7;
    background-color: #e6f8ec;
    color: #444746;
    font-size: 14px;
    font-weight: 400;
}
.letters .selected {
    background-color: #c4eed0;
    font-weight: 500;
}
.letters .corner {
    border-right: 5px solid #c7c7c7;
    background-color: #f8f9fa;
}
.band th {
    border-right: 1px solid #c7c7c7;
    background-color: #fff;
}
.band td {
    height: 37px;
    background-color: #e8eaed;
    vertical-align: bottom;
}
.table-tab {
    display: inline-flex;
    vertical-align: bottom;
    height: 36px;
    border: 1px solid #8f3127;
    border-bottom: 0;
    border-radius: 14px 14px 0 0;
    background-color: #bb473d;
    color: #fff;
    font-size: 16px;
    font-weight: 600;
}
.table-name {
    width: 159px;
    gap: 15px;
    border-right: 1px solid #8f3127;
}
.table-views {
    width: 50px;
}
.titles th {
    position: relative;
    height: 39px;
    border-top: 1px solid #188038;
    border-bottom: 1px solid #8f3127;
    background-color: #bb473d;
    color: #fff;
    font-size: 24px;
    line-height: 30px;
    font-weight: 700;
}
.titles .num {
    border-color: #c7c7c7;
    border-right: 1px solid #c7c7c7;
    background-color: #c4eed0;
    color: #444746;
    font-size: 12px;
    font-weight: 500;
}
.titles .current {
    outline: 2px solid #1a73e8;
    outline-offset: -2px;
}
/* fill handle */
.titles .current::after {
    content: "";
    position: absolute;
    right: -6px;
    bottom: -7px;
    z-index: 1;
    width: 12px;
    height: 12px;
    border: 1px solid #fff;
    border-radius: 50%;
    background-color: #0b57d0;
}
.title-cell {
    display: flex;
    align-items: center;
    gap: 8px;
    padding-right: 12px;
}
.title-cell.has-chip {
    padding-left: 11px;
}
.title-cell span {
    flex: 1;
}
.filter {
    width: 16px;
    height: 11px;
}
.chip-icon {
    width: 19px;
    height: 13px;
}
.add-column {
    position: absolute;
    left: 100%;
    top: 12px;
    width: 25px;
    height: 25px;
    border-radius: 0 5px 5px 0;
    background-color: #f9fbfd;
    box-shadow: 0 1px 3px rgba(0, 0, 0, 0.3);
    color: #444746;
}
.data {
    color: #434343;
    font-size: 21px;
    line-height: 24px;
    text-align: center;
}
.data th {
    border-right: 1px solid #c7c7c7;
    border-bottom: 1px solid #c7c7c7;
    background-color: #e6f8ec;
    color: #444746;
    font-size: 12px;
    font-weight: 400;
}
.data td {
    height: 38px;
    padding: 3px 11px;
    background-color: #fff;
    font-weight: 300;
    white-space: nowrap;
}
.data .date {
    font-size: 19px;
}
.data td:nth-child(2) {
    border-left: 2px solid #8f3127;
}
.data td:last-child {
    padding-right: 9px;
    border-right: 2px solid #8f3127;
}
.data tr:nth-child(odd) td {
    background-color: #f6f8f9;
}
/* first visible row starts under the frozen header */
.data {
    margin-top: -49px;
}
.data .cut-top td {
    height: 174px;
}
.data .cut-bottom td {
    height: 150px;
}
.data .bottom {
    vertical-align: bottom;
}
.data .top {
    vertical-align: top;
}
.chip {
    position: relative;
    display: block;
}
.chip select {
    display: block;
    appearance: none;
    width: 100%;
    height: 24px;
    padding-left: 8px;
    border-radius: 10px;
    line-height: 24px;
}
.chip::after {
    content: "";
    position: absolute;
    right: 9px;
    top: 9px;
    border: 6px solid transparent;
    border-top: 7px solid currentColor;
    border-bottom: 0;
    pointer-events: none;
}
.chip.no {
    color: #6b0a00;
}
.chip.no select {
    background-color: #ff9280;
}
.chip.yes {
    color: #0a5345;
}
.chip.yes select {
    background-color: #a3e3a1;
}
.chip.brown {
    color: #ffc8aa;
}
.chip.brown select {
    background-color: #753800;
}
.chip.red {
    color: #ffcfc9;
}
.chip.red select {
    background-color: #b10202;
}

/* scrollbars */
.vscroll {
    display: flex;
    flex-direction: column;
    width: 15px;
    border-left: 1px solid #d9d9d9;
    background-color: #fff;
}
.vscroll-head {
    height: 111px;
    border-bottom: 5px solid #dde3ea;
    background-color: #f8f8f8;
}
.vscroll-track {
    display: flex;
    flex-direction: column;
    flex: 1;
    padding: 0 1px;
}
.vscroll-track::before {
    content: "";
    flex: 385;
}
.vscroll-track::after {
    content: "";
    flex: 100;
}
.thumb {
    height: 33px;
    border-radius: 6px;
    background-color: #dadada;
}
.vscroll button {
    height: 20px;
    border-top: 1px solid #d9d9d9;
    background-color: #f8f8f8;
}
.arrow {
    border: 4px solid transparent;
}
.arrow.up {
    border-top: 0;
    border-bottom-color: #8a8a8a;
}
.arrow.down {
    border-bottom: 0;
    border-top-color: #8a8a8a;
}
.arrow.left {
    border-left: 0;
    border-right-color: #8a8a8a;
}
.arrow.right {
    border-right: 0;
    border-left-color: #8a8a8a;
}
.hscroll {
    display: flex;
    height: 16px;
    flex-shrink: 0;
    padding-bottom: 2px;
    border-top: 1px solid #d9d9d9;
}
.hscroll-track {
    flex: 1;
    border-left: 59px solid #f8f8f8;
    background-color: #fff;
}
.hscroll button {
    width: 19px;
    border-left: 1px solid #d9d9d9;
    background-color: #f8f8f8;
}
.hscroll-end {
    width: 14px;
    border-left: 1px solid #d9d9d9;
    background-color: #f8f8f8;
}

/* sheet tabs */
.sheet-tabs {
    display: flex;
    align-items: center;
    height: 45px;
    flex-shrink: 0;
    padding: 0 11px 0 53px;
    border-top: 1px solid #dadce0;
    color: #444746;
}
.sheet-button {
    width: 48px;
    height: 44px;
}
.sheet-button.side {
    margin-left: auto;
}
.sheet-tab {
    height: 44px;
    gap: 16px;
    margin-left: 17px;
    padding: 0 15px;
    background-color: #e1e9f7;
    color: #0b57d0;
    font-size: 18px;
    font-weight: 600;
}

/* taskbar */
.taskbar {
    display: flex;
    align-items: center;
    height: 60px;
    flex-shrink: 0;
    padding: 0 24px 0 16px;
    border-top: 1px solid #3a3733;
    background-color: #25221d;
    color: #fff;
    font: 14px/20px "Noto Sans", sans-serif;
}
.app {
    position: relative;
    width: 50px;
    height: 50px;
    margin-right: 5px;
    border-radius: 5px;
}
.app.running::after, .app.focused::after, .app.alert::after {
    content: "";
    position: absolute;
    bottom: 1px;
    left: 21px;
    right: 21px;
    height: 4px;
    border-radius: 2px;
    background-color: #9a9894;
}
.app.focused {
    border: 1px solid #3d3a36;
    background-color: #33302c;
}
.app.focused::after {
    left: 14px;
    right: 14px;
    background-color: #4cc2ff;
}
.app.alert {
    background-color: #84464c;
}
.app.alert::after {
    left: 5px;
    right: 5px;
    background-color: #ff99a4;
}
.badge {
    position: absolute;
    top: 4px;
    right: 6px;
    width: 20px;
    height: 20px;
    border-radius: 50%;
    background-color: #ff99a4;
    color: #25221d;
    font-size: 14px;
}
.live {
    position: absolute;
    top: 5px;
    right: 5px;
    width: 18px;
    height: 18px;
    border: 5px solid #ed4245;
    border-radius: 50%;
    background-color: #fff;
}
.tray {
    display: flex;
    align-items: center;
    margin-left: auto;
}
.tray-icon {
    width: 40px;
    height: 40px;
}
.mic {
    color: #7fd0e8;
}
.lang, .clock {
    flex-direction: column;
}
.lang {
    width: 56px;
}
.net {
    gap: 10px;
    margin: 0 20px 0 8px;
}
.clock {
    align-items: flex-end;
}
```
